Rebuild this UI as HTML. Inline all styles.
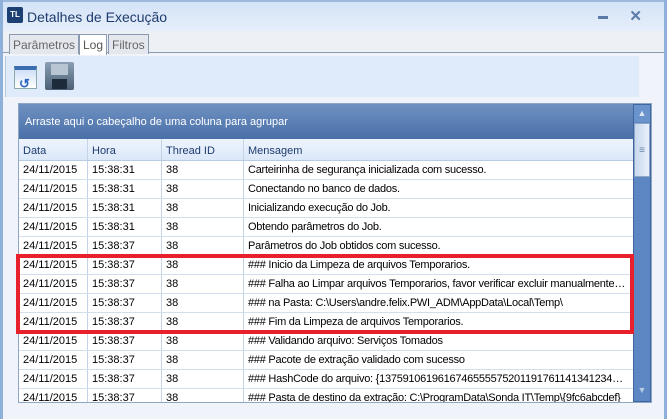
<!DOCTYPE html>
<html><head><meta charset="utf-8"><style>
*{margin:0;padding:0;box-sizing:border-box}
body{width:667px;height:419px;overflow:hidden;background:#fff;font-family:"Liberation Sans",sans-serif;position:relative}
.abs{position:absolute}
.win{left:0;top:0;width:667px;height:419px;background:#f0f4fa;border-left:3px solid #8fb0d8;border-right:3px solid #8fb0d8}
.title{left:3px;top:0;width:661px;height:31px;background:linear-gradient(#d4e3f7,#e6eefa);border-top:2px solid #9cb8dc}
.title span{position:absolute;left:24px;top:7px;font-size:14px;color:#1e3c6e}
.logo{left:7px;top:7px;width:16px;height:16px;background:#1c3f74;border-radius:2px;color:#fff;font-size:8px;font-weight:bold;text-align:center;line-height:16px}
.tabsbar{left:3px;top:31px;width:661px;height:22px;background:#edf1f5;border-bottom:1px solid #8a9bb0}
.tab{top:34px;height:20px;border:1px solid #8a9bb0;border-bottom:none;background:#e4e8ee;font-size:12px;color:#666;padding:3px 3px 0}
.toolbar{left:5px;top:56px;width:634px;height:41px;background:#dfeafb;border-left:1px solid #b8c8dc}
.grid{left:18px;top:103px;width:634px;height:300px;border:1px solid #8ea5c6;background:#fff;overflow:hidden}
.grp{left:0;top:0;width:614px;height:35px;background:linear-gradient(#6e91c1,#4a70a8);color:#fff;font-size:11px;padding:12px 0 0 6px}
.hdr{left:0;top:35px;width:614px;height:22px;background:linear-gradient(#eef4fd,#dbe8f9);border-bottom:1px solid #b9cbe3}
.c{position:absolute;top:0;height:100%;border-right:1px solid #c5d3e6;font-size:11px;padding-left:4px;white-space:nowrap;overflow:hidden;text-overflow:ellipsis}
.hdr .c{color:#1e3c6e;padding-top:6px}
.row{position:absolute;left:0;width:614px;height:19px;border-bottom:1px solid #d3deec}
.row .c{padding-top:3px;color:#000}
.m{letter-spacing:-0.25px;padding-right:6px}
.sb{left:614px;top:0;width:18px;height:298px;background:#5d87c2;border:1px solid #3f669e}
.red{left:16px;top:254px;width:618px;height:80px;border:4px solid #e8202c}
</style></head><body>
<div class="abs win"></div>
<div class="abs title"><span>Detalhes de Execução</span><div style="position:absolute;right:56px;top:14px;width:10px;height:3px;background:#5a7ba8"></div><div style="position:absolute;right:22px;top:5px;font-size:15px;font-weight:bold;color:#5a7ba8">✕</div></div>
<div class="abs logo">TL</div>
<div class="abs tabsbar"></div>
<div class="abs tab" style="left:9px;width:70px">Parâmetros</div>
<div class="abs tab" style="left:79px;width:28px;background:#fff;height:21px;color:#555">Log</div>
<div class="abs tab" style="left:108px;width:41px">Filtros</div>
<div class="abs toolbar"></div>
<div class="abs" style="left:14px;top:66px;width:23px;height:23px;background:linear-gradient(#cfe0f7,#fff);border:1px solid #8aa;border-top:4px solid #3c6cb0"><div style="position:absolute;left:4px;top:6px;color:#2b66c2;font-size:13px;font-weight:bold">↺</div></div>
<div class="abs" style="left:45px;top:62px;width:29px;height:28px;background:linear-gradient(#8a9fb4,#4c5f74);border-radius:2px"><div style="position:absolute;left:6px;top:2px;width:17px;height:11px;background:#b8c6d4"></div><div style="position:absolute;left:7px;top:17px;width:15px;height:10px;background:#1c2a3a"></div></div>
<div class="abs grid">
<div class="abs grp">Arraste aqui o cabeçalho de uma coluna para agrupar</div>
<div class="abs hdr"><div class="c" style="left:0;width:69px">Data</div><div class="c" style="left:69px;width:74px">Hora</div><div class="c" style="left:143px;width:82px">Thread ID</div><div class="c" style="left:225px;width:389px;border:none">Mensagem</div></div>
<div id="rows"></div>
<div class="abs sb"><div style="position:absolute;left:0;top:0;width:16px;height:17px;background:#6a93cb;color:#dde8f6;font-size:9px;text-align:center;line-height:17px">▲</div><div style="position:absolute;left:0;top:18px;width:16px;height:54px;background:linear-gradient(90deg,#c8d8ee,#e8f0fb);border:1px solid #8ea5c6;color:#6b85a8;font-size:10px;text-align:center;line-height:54px">≡</div><div style="position:absolute;left:0;bottom:2px;width:16px;height:14px;color:#b8cbe6;font-size:9px;text-align:center">▼</div></div>
</div>
<div class="abs red"></div>
<script>
var m=["Carteirinha de segurança inicializada com sucesso.","Conectando no banco de dados.","Inicializando execução do Job.","Obtendo parâmetros do Job.","Parâmetros do Job obtidos com sucesso.","### Inicio da Limpeza de arquivos Temporarios.","### Falha ao Limpar arquivos Temporarios, favor verificar excluir manualmente os arquivos","### na Pasta: C:\\Users\\andre.felix.PWI_ADM\\AppData\\Local\\Temp\\","### Fim da Limpeza de arquivos Temporarios.","### Validando arquivo: Serviços Tomados","### Pacote de extração validado com sucesso","### HashCode do arquivo: {1375910619616746555575201191761141341234567}","### Pasta de destino da extração: C:\\ProgramData\\Sonda IT\\Temp\\{9fc6abcdef}"];
var h="";for(var i=0;i<m.length;i++){var t=i<4?"15:38:31":"15:38:37";h+='<div class="row" style="top:'+(57+i*19)+'px"><div class="c" style="left:0;width:69px">24/11/2015</div><div class="c" style="left:69px;width:74px">'+t+'</div><div class="c" style="left:143px;width:82px">38</div><div class="c m" style="left:225px;width:389px;border:none">'+m[i]+'</div></div>';}
document.getElementById("rows").innerHTML=h;
</script>
</body></html>
